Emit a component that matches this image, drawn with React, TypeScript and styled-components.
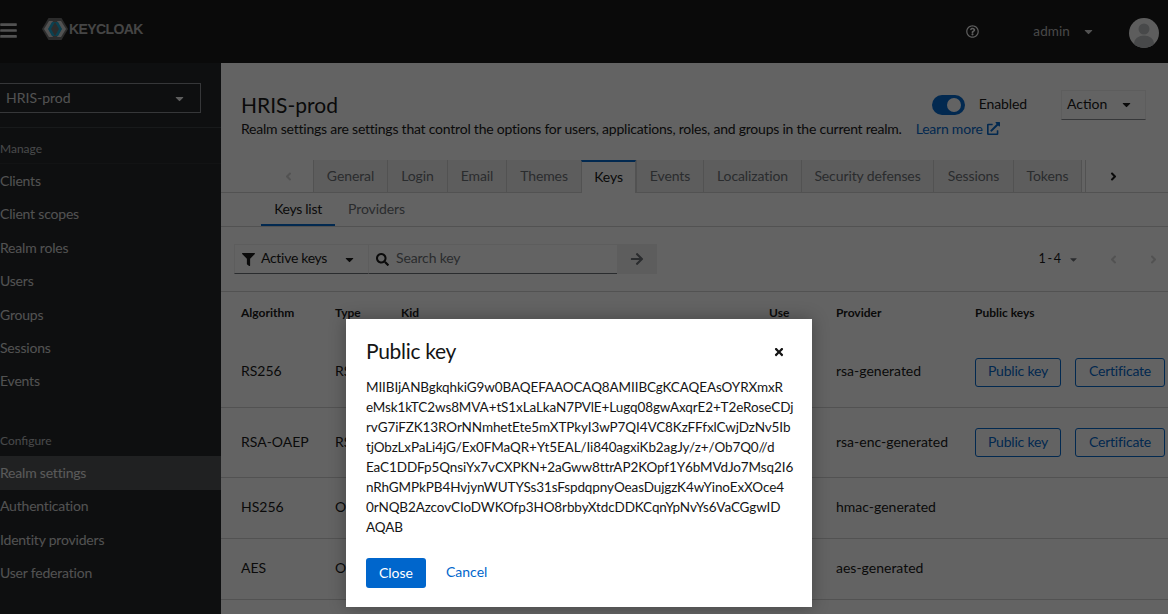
import React from 'react';
import styled, { createGlobalStyle } from 'styled-components';
import {
    FaAngleLeft,
    FaAngleRight,
    FaArrowRight,
    FaBars,
    FaCaretDown,
    FaExternalLinkAlt,
    FaFilter,
    FaRegQuestionCircle,
    FaSearch,
    FaTimes,
} from 'react-icons/fa';

const FONT = 'Lato, "Noto Sans", "Liberation Sans", sans-serif';

const GlobalStyle = createGlobalStyle`
    html, body {
        margin: 0;
        padding: 0;
        height: 100%;
        overflow: hidden;
        font-family: ${FONT};
        font-size: 14px;
        color: #151515;
        background: #fff;
    }
    * { box-sizing: border-box; }
`;

const Page = styled.div`
    position: relative;
    width: 1168px;
    height: 614px;
    overflow: hidden;
    display: flex;
    flex-direction: column;
`;

const Header = styled.header`
    flex: 0 0 63px;
    background: #151515;
    color: #d2d2d2;
    display: flex;
    align-items: center;
`;

const Burger = styled.div`
    width: 42px;
    display: flex;
    font-size: 19px;
    color: #d2d2d2;
    margin-top: -2px;
    svg { margin-left: -1px; }
`;

const Logo = styled.div`
    display: flex;
    align-items: center;
    margin-top: -5px;
    gap: 1px;
`;

const LogoText = styled.span`
    font-family: "Liberation Sans", sans-serif;
    font-weight: 700;
    font-size: 14px;
    letter-spacing: -0.6px;
    color: #b0b0b0;
`;

const HeaderRight = styled.div`
    margin-left: auto;
    display: flex;
    align-items: center;
`;

const HelpIcon = styled.div`
    display: flex;
    font-size: 13px;
    color: #f0f0f0;
    margin-right: 54px;
`;

const UserName = styled.span`
    font-size: 13.5px;
    color: #b8b8b8;
    margin-right: 12px;
    padding-bottom: 2px;
    letter-spacing: 0.1px;
`;

const UserCaret = styled.div`
    display: flex;
    font-size: 13px;
    color: #d2d2d2;
    margin-right: 34px;
`;

const Avatar = styled.svg`
    width: 30px;
    height: 30px;
    margin-right: 9px;
    margin-top: 2px;
`;

const Body = styled.div`
    flex: 1;
    display: flex;
    min-height: 0;
`;

const Sidebar = styled.nav`
    flex: 0 0 221px;
    background: #212427;
    color: #d2d2d2;
    padding-top: 20px;
`;

const RealmSelect = styled.div`
    width: 209px;
    height: 30px;
    margin-left: -8px;
    padding: 0 14px 2px 13px;
    border: 1px solid #8a8d90;
    display: flex;
    align-items: center;
    justify-content: space-between;
    color: #d2d2d2;
    font-size: 14px;
    svg { font-size: 13px; color: #f0f0f0; margin-top: 2px; }
`;

const NavDivider = styled.div`
    height: 1px;
    background: #3c3f42;
    margin-top: 14px;
`;

const NavTitle = styled.div<{ $top: number; $bottom: number }>`
    padding-top: ${p => p.$top}px;
    padding-bottom: ${p => p.$bottom}px;
    line-height: 20px;
    font-size: 12px;
    color: #b8bbbe;
`;

const NavGroupLine = styled.div`
    height: 1px;
    background: #2b2e31;
`;

const NavItem = styled.div<{ $active?: boolean }>`
    height: ${p => (p.$active ? '34.7px' : '33.4px')};
    margin-bottom: ${p => (p.$active ? '-1.3px' : '0')};
    line-height: 33.4px;
    font-size: 14px;
    letter-spacing: -0.2px;
    color: ${p => (p.$active ? '#e6e6e6' : '#d2d2d2')};
    background: ${p => (p.$active ? '#4f5255' : 'transparent')};
    white-space: nowrap;
`;

const Main = styled.main`
    flex: 1;
    min-width: 0;
    background: #fff;
`;

const TitleSection = styled.section`
    height: 97px;
    padding: 27px 22px 0 20px;
`;

const TitleRow = styled.div`
    display: flex;
    align-items: center;
    height: 30px;
`;

const PageTitle = styled.h1`
    margin: 0;
    padding-bottom: 2px;
    font-size: 21px;
    font-weight: 400;
    flex: 1;
`;

const Toggle = styled.div`
    width: 33px;
    height: 20px;
    border-radius: 10px;
    background: #06c;
    position: relative;
    margin-right: 14px;
    &::after {
        content: '';
        position: absolute;
        top: 3px;
        right: 4px;
        width: 14px;
        height: 14px;
        border-radius: 50%;
        background: #fff;
    }
`;

const ToggleLabel = styled.span`
    font-size: 14px;
    letter-spacing: -0.1px;
    color: #151515;
    margin-right: 34px;
    padding-bottom: 3px;
`;

const ActionSelect = styled.div`
    width: 85px;
    height: 30px;
    padding: 0 12px 3px 5px;
    border: 1px solid #f0f0f0;
    border-bottom-color: #8a8d90;
    display: flex;
    align-items: center;
    justify-content: space-between;
    svg { font-size: 13px; margin-top: 2px; }
`;

const Subtitle = styled.p`
    margin: -1px 0 0;
    height: 20px;
    line-height: 20px;
    font-size: 14px;
    letter-spacing: -0.225px;
    white-space: nowrap;
`;

const LearnMore = styled.span`
    color: #06c;
    margin-left: 14px;
    svg { font-size: 13px; margin-left: 4px; vertical-align: -1px; }
`;

const TabBar = styled.div`
    height: 33px;
    display: flex;
    border-bottom: 1px solid #d2d2d2;
`;

const TabScroll = styled.div<{ $width: number; $left?: number; $dim?: boolean }>`
    flex: 0 0 ${p => p.$width}px;
    padding-left: ${p => p.$left ?? 0}px;
    display: flex;
    align-items: center;
    justify-content: center;
    font-size: 13px;
    color: ${p => (p.$dim ? '#d2d2d2' : '#151515')};
`;

const Tab = styled.div<{ $width: number; $active?: boolean }>`
    flex: 0 0 ${p => p.$width}px;
    height: ${p => (p.$active ? '33px' : '32px')};
    padding-bottom: 2px;
    display: flex;
    align-items: center;
    justify-content: center;
    font-size: 14px;
    letter-spacing: -0.1px;
    white-space: nowrap;
    border-left: 1px solid #d2d2d2;
    color: ${p => (p.$active ? '#151515' : '#6a6e73')};
    background: ${p => (p.$active ? '#fff' : '#f0f0f0')};
    border-top: ${p => (p.$active ? '2px solid #06c' : 'none')};
    border-right: ${p => (p.$active ? '1px solid #d2d2d2' : 'none')};
`;

const TabSpacer = styled.div`
    flex: 0 0 5px;
    border-left: 1px solid #d2d2d2;
    border-right: 1px solid #d2d2d2;
    height: 32px;
`;

const SubTabBar = styled.div`
    height: 34px;
    display: flex;
    padding-left: 40px;
    border-bottom: 1px solid #d2d2d2;
`;

const SubTab = styled.div<{ $active?: boolean }>`
    padding: 0 13px ${p => (p.$active ? '1px' : '3px')};
    height: 33px;
    min-width: 74px;
    display: flex;
    align-items: center;
    justify-content: center;
    font-size: 14px;
    letter-spacing: ${p => (p.$active ? '-0.3px' : '-0.1px')};
    white-space: nowrap;
    color: ${p => (p.$active ? '#151515' : '#6a6e73')};
    border-bottom: ${p => (p.$active ? '2px solid #06c' : 'none')};
`;

const Toolbar = styled.div`
    height: 65px;
    padding: 17px 0 0 13px;
    display: flex;
    align-items: flex-start;
    border-bottom: 1px solid #d2d2d2;
`;

const FilterSelect = styled.div`
    width: 135px;
    height: 30px;
    display: flex;
    align-items: center;
    padding: 0 12px 0 7px;
    font-size: 14px;
    letter-spacing: -0.3px;
    border: 1px solid #f0f0f0;
    border-bottom-color: #6a6e73;
    span { flex: 1; margin-left: 6px; padding-bottom: 3px; white-space: nowrap; }
    svg { font-size: 13px; }
`;

const SearchBox = styled.div`
    width: 248px;
    height: 30px;
    display: flex;
    align-items: center;
    padding-left: 7px;
    font-size: 14px;
    letter-spacing: -0.15px;
    color: #6a6e73;
    border-top: 1px solid #f0f0f0;
    border-bottom: 1px solid #6a6e73;
    span { margin-left: 7px; padding-bottom: 3px; }
    svg { font-size: 13px; color: #151515; }
`;

const SearchButton = styled.div`
    width: 40px;
    height: 30px;
    display: flex;
    align-items: center;
    justify-content: center;
    background: #f0f0f0;
    color: #6a6e73;
    font-size: 14px;
`;

const Pagination = styled.div`
    margin-left: auto;
    height: 30px;
    display: flex;
    align-items: center;
    font-size: 12.5px;
`;

const PageRange = styled.span`
    margin-right: 7px;
    padding-bottom: 2px;
    word-spacing: -1.5px;
    white-space: nowrap;
`;

const PageCaret = styled.div`
    display: flex;
    color: #6a6e73;
    font-size: 11px;
    margin-right: 14px;
`;

const PageArrow = styled.div`
    width: 40px;
    display: flex;
    justify-content: center;
    color: #d2d2d2;
    font-size: 13px;
    &:last-child { margin-right: -5px; }
`;

const Row = styled.div<{ $height: number; $line?: boolean }>`
    height: ${p => p.$height}px;
    padding-left: 20px;
    display: grid;
    grid-template-columns: 94px 66px 368px 67px 139px 1fr;
    align-items: center;
    white-space: nowrap;
    border-bottom: ${p => (p.$line ? '1px solid #d2d2d2' : 'none')};
    font-size: 14px;
`;

const HeadCell = styled.div`
    font-size: 12px;
    font-weight: 700;
    padding-bottom: 4px;
`;

const Cell = styled.div`
    padding-bottom: 3px;
`;

const Buttons = styled.div`
    display: flex;
    gap: 14px;
`;

const OutlineButton = styled.div<{ $width: number }>`
    width: ${p => p.$width}px;
    height: 29px;
    padding-bottom: 3px;
    display: flex;
    align-items: center;
    justify-content: center;
    color: #06c;
    border: 1px solid #06c;
    border-radius: 3px;
    font-size: 14px;
    letter-spacing: -0.2px;
`;

const Backdrop = styled.div`
    position: absolute;
    inset: 0;
    background: rgba(3, 3, 3, 0.62);
`;

const Modal = styled.div`
    position: absolute;
    left: 346px;
    top: 319px;
    width: 466px;
    height: 288px;
    padding: 20px;
    background: #fff;
    box-shadow: 0 0 16px rgba(3, 3, 3, 0.3);
`;

const ModalHead = styled.div`
    height: 26px;
    display: flex;
    align-items: center;
    justify-content: space-between;
    margin-bottom: 12px;
`;

const ModalTitle = styled.h2`
    margin: 0;
    padding-bottom: 4px;
    font-size: 21px;
    font-weight: 400;
    letter-spacing: -0.3px;
`;

const CloseIcon = styled.div`
    display: flex;
    font-size: 12px;
    margin-right: 7px;
`;

const KeyLine = styled.div`
    height: 20px;
    line-height: 20px;
    font-size: 13.5px;
    letter-spacing: -0.1px;
    white-space: nowrap;
`;

const ModalFooter = styled.div`
    display: flex;
    align-items: center;
    margin-top: 21px;
`;

const PrimaryButton = styled.div`
    width: 60px;
    height: 30px;
    padding-bottom: 2px;
    display: flex;
    align-items: center;
    justify-content: center;
    border-radius: 3px;
    background: #06c;
    color: #fff;
    font-size: 14px;
`;

const LinkButton = styled.div`
    margin-left: 20px;
    padding-bottom: 3px;
    color: #06c;
    font-size: 14px;
`;

const manageItems = ['Clients', 'Client scopes', 'Realm roles', 'Users', 'Groups', 'Sessions', 'Events'];
const configureItems = ['Realm settings', 'Authentication', 'Identity providers', 'User federation'];

const tabs = [
    { label: 'General', width: 74 },
    { label: 'Login', width: 60 },
    { label: 'Email', width: 59 },
    { label: 'Themes', width: 75 },
    { label: 'Keys', width: 55, active: true },
    { label: 'Events', width: 67 },
    { label: 'Localization', width: 98 },
    { label: 'Security defenses', width: 132 },
    { label: 'Sessions', width: 80 },
    { label: 'Tokens', width: 68 },
];

const keys = [
    { algorithm: 'RS256', type: 'RSA', provider: 'rsa-generated', height: 71, buttons: true },
    { algorithm: 'RSA-OAEP', type: 'RSA', provider: 'rsa-enc-generated', height: 70, buttons: true },
    { algorithm: 'HS256', type: 'OCT', provider: 'hmac-generated', height: 61 },
    { algorithm: 'AES', type: 'OCT', provider: 'aes-generated', height: 61 },
];

const publicKey = [
    'MIIBIjANBgkqhkiG9w0BAQEFAAOCAQ8AMIIBCgKCAQEAsOYRXmxR',
    'eMsk1kTC2ws8MVA+tS1xLaLkaN7PVlE+Lugq08gwAxqrE2+T2eRoseCDj',
    'rvG7iFZK13ROrNNmhetEte5mXTPkyI3wP7QI4VC8KzFFfxlCwjDzNv5Ib',
    'tjObzLxPaLi4jG/Ex0FMaQR+Yt5EAL/Ii840agxiKb2agJy/z+/Ob7Q0//d',
    'EaC1DDFp5QnsiYx7vCXPKN+2aGww8ttrAP2KOpf1Y6bMVdJo7Msq2I6',
    'nRhGMPkPB4HvjynWUTYSs31sFspdqpnyOeasDujgzK4wYinoExXOce4',
    '0rNQB2AzcovCIoDWKOfp3HO8rbbyXtdcDDKCqnYpNvYs6VaCGgwID',
    'AQAB',
];

const KeycloakMark = () => (
    <svg width="26" height="22" viewBox="0 0 26 22">
        <polygon points="0,11 6.5,0 19.5,0 26,11 19.5,22 6.5,22" fill="#6f6f6f" />
        <polygon points="2,11 7,3 11,3 6.5,11 11,19 7,19" fill="#d2d2d2" />
        <polygon points="6,11 10,4 13,4 9,11 13,18 10,18" fill="#1aa6d0" />
        <polygon points="24,11 19,3 15,3 19.5,11 15,19 19,19" fill="#d2d2d2" />
        <polygon points="20,11 16,4 13,4 17,11 13,18 16,18" fill="#1aa6d0" />
    </svg>
);

const App: React.FC = () => (
    <Page>
        <GlobalStyle />
        <Header>
            <Burger><FaBars /></Burger>
            <Logo>
                <KeycloakMark />
                <LogoText>KEYCLOAK</LogoText>
            </Logo>
            <HeaderRight>
                <HelpIcon><FaRegQuestionCircle /></HelpIcon>
                <UserName>admin</UserName>
                <UserCaret><FaCaretDown /></UserCaret>
                <Avatar viewBox="0 0 30 30">
                    <defs>
                        <clipPath id="avatar-clip"><circle cx="15" cy="15" r="15" /></clipPath>
                    </defs>
                    <g clipPath="url(#avatar-clip)">
                        <rect width="30" height="30" fill="#f0f0f0" />
                        <circle cx="15" cy="11" r="5.5" fill="#b8bbbe" />
                        <ellipse cx="15" cy="25" rx="10" ry="7.5" fill="#b8bbbe" />
                    </g>
                </Avatar>
            </HeaderRight>
        </Header>
        <Body>
            <Sidebar>
                <RealmSelect>HRIS-prod<FaCaretDown /></RealmSelect>
                <NavDivider />
                <NavTitle $top={11} $bottom={4}>Manage</NavTitle>
                <NavGroupLine />
                {manageItems.map(item => <NavItem key={item}>{item}</NavItem>)}
                <NavTitle $top={33} $bottom={5}>Configure</NavTitle>
                <NavItem $active>{configureItems[0]}</NavItem>
                {configureItems.slice(1).map(item => <NavItem key={item}>{item}</NavItem>)}
            </Sidebar>
            <Main>
                <TitleSection>
                    <TitleRow>
                        <PageTitle>HRIS-prod</PageTitle>
                        <Toggle />
                        <ToggleLabel>Enabled</ToggleLabel>
                        <ActionSelect>Action<FaCaretDown /></ActionSelect>
                    </TitleRow>
                    <Subtitle>
                        Realm settings are settings that control the options for users, applications, roles, and groups in the current realm.
                        <LearnMore>Learn more<FaExternalLinkAlt /></LearnMore>
                    </Subtitle>
                </TitleSection>
                <TabBar>
                    <TabScroll $width={92} $left={42} $dim><FaAngleLeft /></TabScroll>
                    {tabs.map(tab => (
                        <Tab key={tab.label} $width={tab.width} $active={tab.active}>{tab.label}</Tab>
                    ))}
                    <TabSpacer />
                    <TabScroll $width={54}><FaAngleRight /></TabScroll>
                </TabBar>
                <SubTabBar>
                    <SubTab $active>Keys list</SubTab>
                    <SubTab>Providers</SubTab>
                </SubTabBar>
                <Toolbar>
                    <FilterSelect><FaFilter /><span>Active keys</span><FaCaretDown /></FilterSelect>
                    <SearchBox><FaSearch /><span>Search key</span></SearchBox>
                    <SearchButton><FaArrowRight /></SearchButton>
                    <Pagination>
                        <PageRange>1 - 4</PageRange>
                        <PageCaret><FaCaretDown /></PageCaret>
                        <PageArrow><FaAngleLeft /></PageArrow>
                        <PageArrow><FaAngleRight /></PageArrow>
                    </Pagination>
                </Toolbar>
                <Row $height={45}>
                    <HeadCell>Algorithm</HeadCell>
                    <HeadCell>Type</HeadCell>
                    <HeadCell>Kid</HeadCell>
                    <HeadCell>Use</HeadCell>
                    <HeadCell>Provider</HeadCell>
                    <HeadCell>Public keys</HeadCell>
                </Row>
                {keys.map(key => (
                    <Row key={key.algorithm} $height={key.height} $line>
                        <Cell>{key.algorithm}</Cell>
                        <Cell>{key.type}</Cell>
                        <Cell />
                        <Cell />
                        <Cell>{key.provider}</Cell>
                        {key.buttons ? (
                            <Buttons>
                                <OutlineButton $width={86}>Public key</OutlineButton>
                                <OutlineButton $width={90}>Certificate</OutlineButton>
                            </Buttons>
                        ) : <Cell />}
                    </Row>
                ))}
            </Main>
        </Body>
        <Backdrop />
        <Modal>
            <ModalHead>
                <ModalTitle>Public key</ModalTitle>
                <CloseIcon><FaTimes /></CloseIcon>
            </ModalHead>
            {publicKey.map(line => <KeyLine key={line}>{line}</KeyLine>)}
            <ModalFooter>
                <PrimaryButton>Close</PrimaryButton>
                <LinkButton>Cancel</LinkButton>
            </ModalFooter>
        </Modal>
    </Page>
);

export default App;
